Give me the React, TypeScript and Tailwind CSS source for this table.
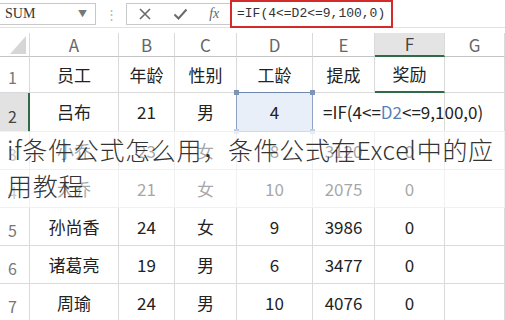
import React from "react"

const cols = ["A", "B", "C", "D", "E", "F", "G"]

const rows: string[][] = [
  ["员工", "年龄", "性别", "工龄", "提成", "奖励", ""],
  ["吕布", "21", "男", "4", "", "", ""],
  ["小乔", "23", "女", "8", "3120", "0", ""],
  ["大乔", "21", "女", "10", "2075", "0", ""],
  ["孙尚香", "24", "女", "9", "3986", "0", ""],
  ["诸葛亮", "19", "男", "6", "3477", "0", ""],
  ["周瑜", "24", "男", "10", "4076", "0", ""],
]

const font = { fontFamily: '"Noto Sans CJK SC", "Noto Sans", sans-serif' }

function Cell({ text, r, c }: { text: string; r: number; c: number }) {
  // D2 is the selected cell
  if (r === 1 && c === 3) {
    return (
      <div className="relative flex items-center justify-center border-r border-b border-[#dadada] bg-[#e9eff8] text-[17px] text-[#222]">
        <div className="absolute -inset-px border border-[#8ea3c3] border-t-[#6f87ab]" />
        <span className="absolute -left-[3px] -top-[3px] h-[5px] w-[5px] bg-[#7d94b6]" />
        <span className="absolute -right-[3px] -top-[3px] h-[5px] w-[5px] bg-[#7d94b6]" />
        <span className="absolute -left-[3px] -bottom-[3px] h-[5px] w-[5px] bg-[#c3cfe0]" />
        <span className="absolute -right-[3px] -bottom-[3px] h-[5px] w-[5px] bg-[#c3cfe0]" />
        <span className="relative">{text}</span>
      </div>
    )
  }
  // formula in E2 spills over F2
  if (r === 1 && c === 4) {
    return (
      <div className="col-span-2 flex items-center whitespace-nowrap border-r border-b border-[#dadada] pl-[10px] text-[17px] text-[#222]">
        =IF(4&lt;=<span className="text-[#5a7fb8]">D2</span>&lt;=9,100,0)
      </div>
    )
  }
  if (r === 1 && c === 5) return null
  return (
    <div
      className={
        r === 0 && c === 5
          ? "flex items-center justify-center border-r border-b-2 border-r-[#dadada] border-b-[#2f6b45] text-[17px] text-[#222]"
          : "flex items-center justify-center border-r border-b border-[#dadada] text-[17px] text-[#222]"
      }
    >
      {text}
    </div>
  )
}

export default function App() {
  return (
    <div className="relative h-[320px] w-[505px] overflow-hidden bg-white" style={font}>
      {/* Formula bar */}
      <div className="flex h-[28px] items-center border-b border-[#e2e2e2]">
        <div className="flex h-[22px] w-[96px] items-center justify-between border border-l-0 border-[#c9c9c9] pl-[5px] pr-[8px]">
          <span className="text-[14px] text-[#333]" style={{ fontFamily: '"Liberation Serif", serif' }}>SUM</span>
          <span className="text-[9px] text-[#777]">▼</span>
        </div>
        <div className="flex w-[30px] justify-center text-[13px] leading-none text-[#b5b5b5]">⋮</div>
        <div className="flex h-[22px] w-[104px] items-center justify-around border border-r-0 border-[#c9c9c9] text-[#666]">
          <svg width="14" height="14" viewBox="0 0 14 14">
            <path d="M2 2 L12 12 M12 2 L2 12" stroke="#6a6a6a" strokeWidth="1.6" />
          </svg>
          <svg width="15" height="14" viewBox="0 0 15 14">
            <path d="M1.5 7.5 L5.5 11.5 L13.5 2.5" stroke="#6a6a6a" strokeWidth="2" fill="none" />
          </svg>
          <span className="text-[14px] italic text-[#666]" style={{ fontFamily: '"Liberation Serif", serif' }}>
            fx
          </span>
        </div>
        <div className="flex h-[28px] w-[163px] items-center border-2 border-[#d42a2a] pl-[5px] text-[13px] text-[#333]" style={{ fontFamily: '"Liberation Mono", monospace' }}>
          =IF(4&lt;=D2&lt;=9,100,0)
        </div>
        <div className="flex-1" />
      </div>

      {/* Grid */}
      <div className="mt-[5px] grid grid-cols-[30px_89px_56px_62px_76px_62px_70px_60px] grid-rows-[24px_36px_39px_38px_38px_38px_38px_38px]">
        <div className="flex items-end justify-end border-r border-b border-r-[#dadada] border-b-[#c4c4c4] pb-[2px] pr-[3px]">
          <svg width="16" height="18" viewBox="0 0 16 18">
            <path d="M16 0 L16 18 L0 18 Z" fill="#d6d6d6" />
          </svg>
        </div>
        {cols.map((c) => (
          <div
            key={c}
            className={
              c === "F"
                ? "flex items-center justify-center border-r border-b-2 border-r-[#dadada] border-b-[#2f6b45] bg-[#e4e4e4] text-[17px] text-[#444]"
                : "flex items-center justify-center border-r border-b border-r-[#dadada] border-b-[#c4c4c4] text-[17px] text-[#666]"
            }
          >
            {c}
          </div>
        ))}
        {rows.map((row, r) => (
          <React.Fragment key={r}>
            <div
              className={
                r === 1
                  ? "flex items-end border-r-2 border-b border-r-[#2f6b45] border-b-[#dadada] bg-[#e2e2e2] pb-[3px] pl-[8px] text-[16px] text-[#444]"
                  : "flex items-end border-r border-b border-[#dadada] pb-[3px] pl-[8px] text-[16px] text-[#777]"
              }
            >
              {r + 1}
            </div>
            {row.map((t, c) => (
              <Cell key={c} text={t} r={r} c={c} />
            ))}
          </React.Fragment>
        ))}
      </div>

      {/* Title overlay */}
      <div className="absolute left-0 right-0 top-[131px] h-[77px] bg-white/60 pl-[7px] text-[25px] font-light leading-[36px] tracking-[0.7px] text-[#333]">
        if条件公式怎么用，条件公式在Excel中的应用教程
      </div>
    </div>
  )
}
